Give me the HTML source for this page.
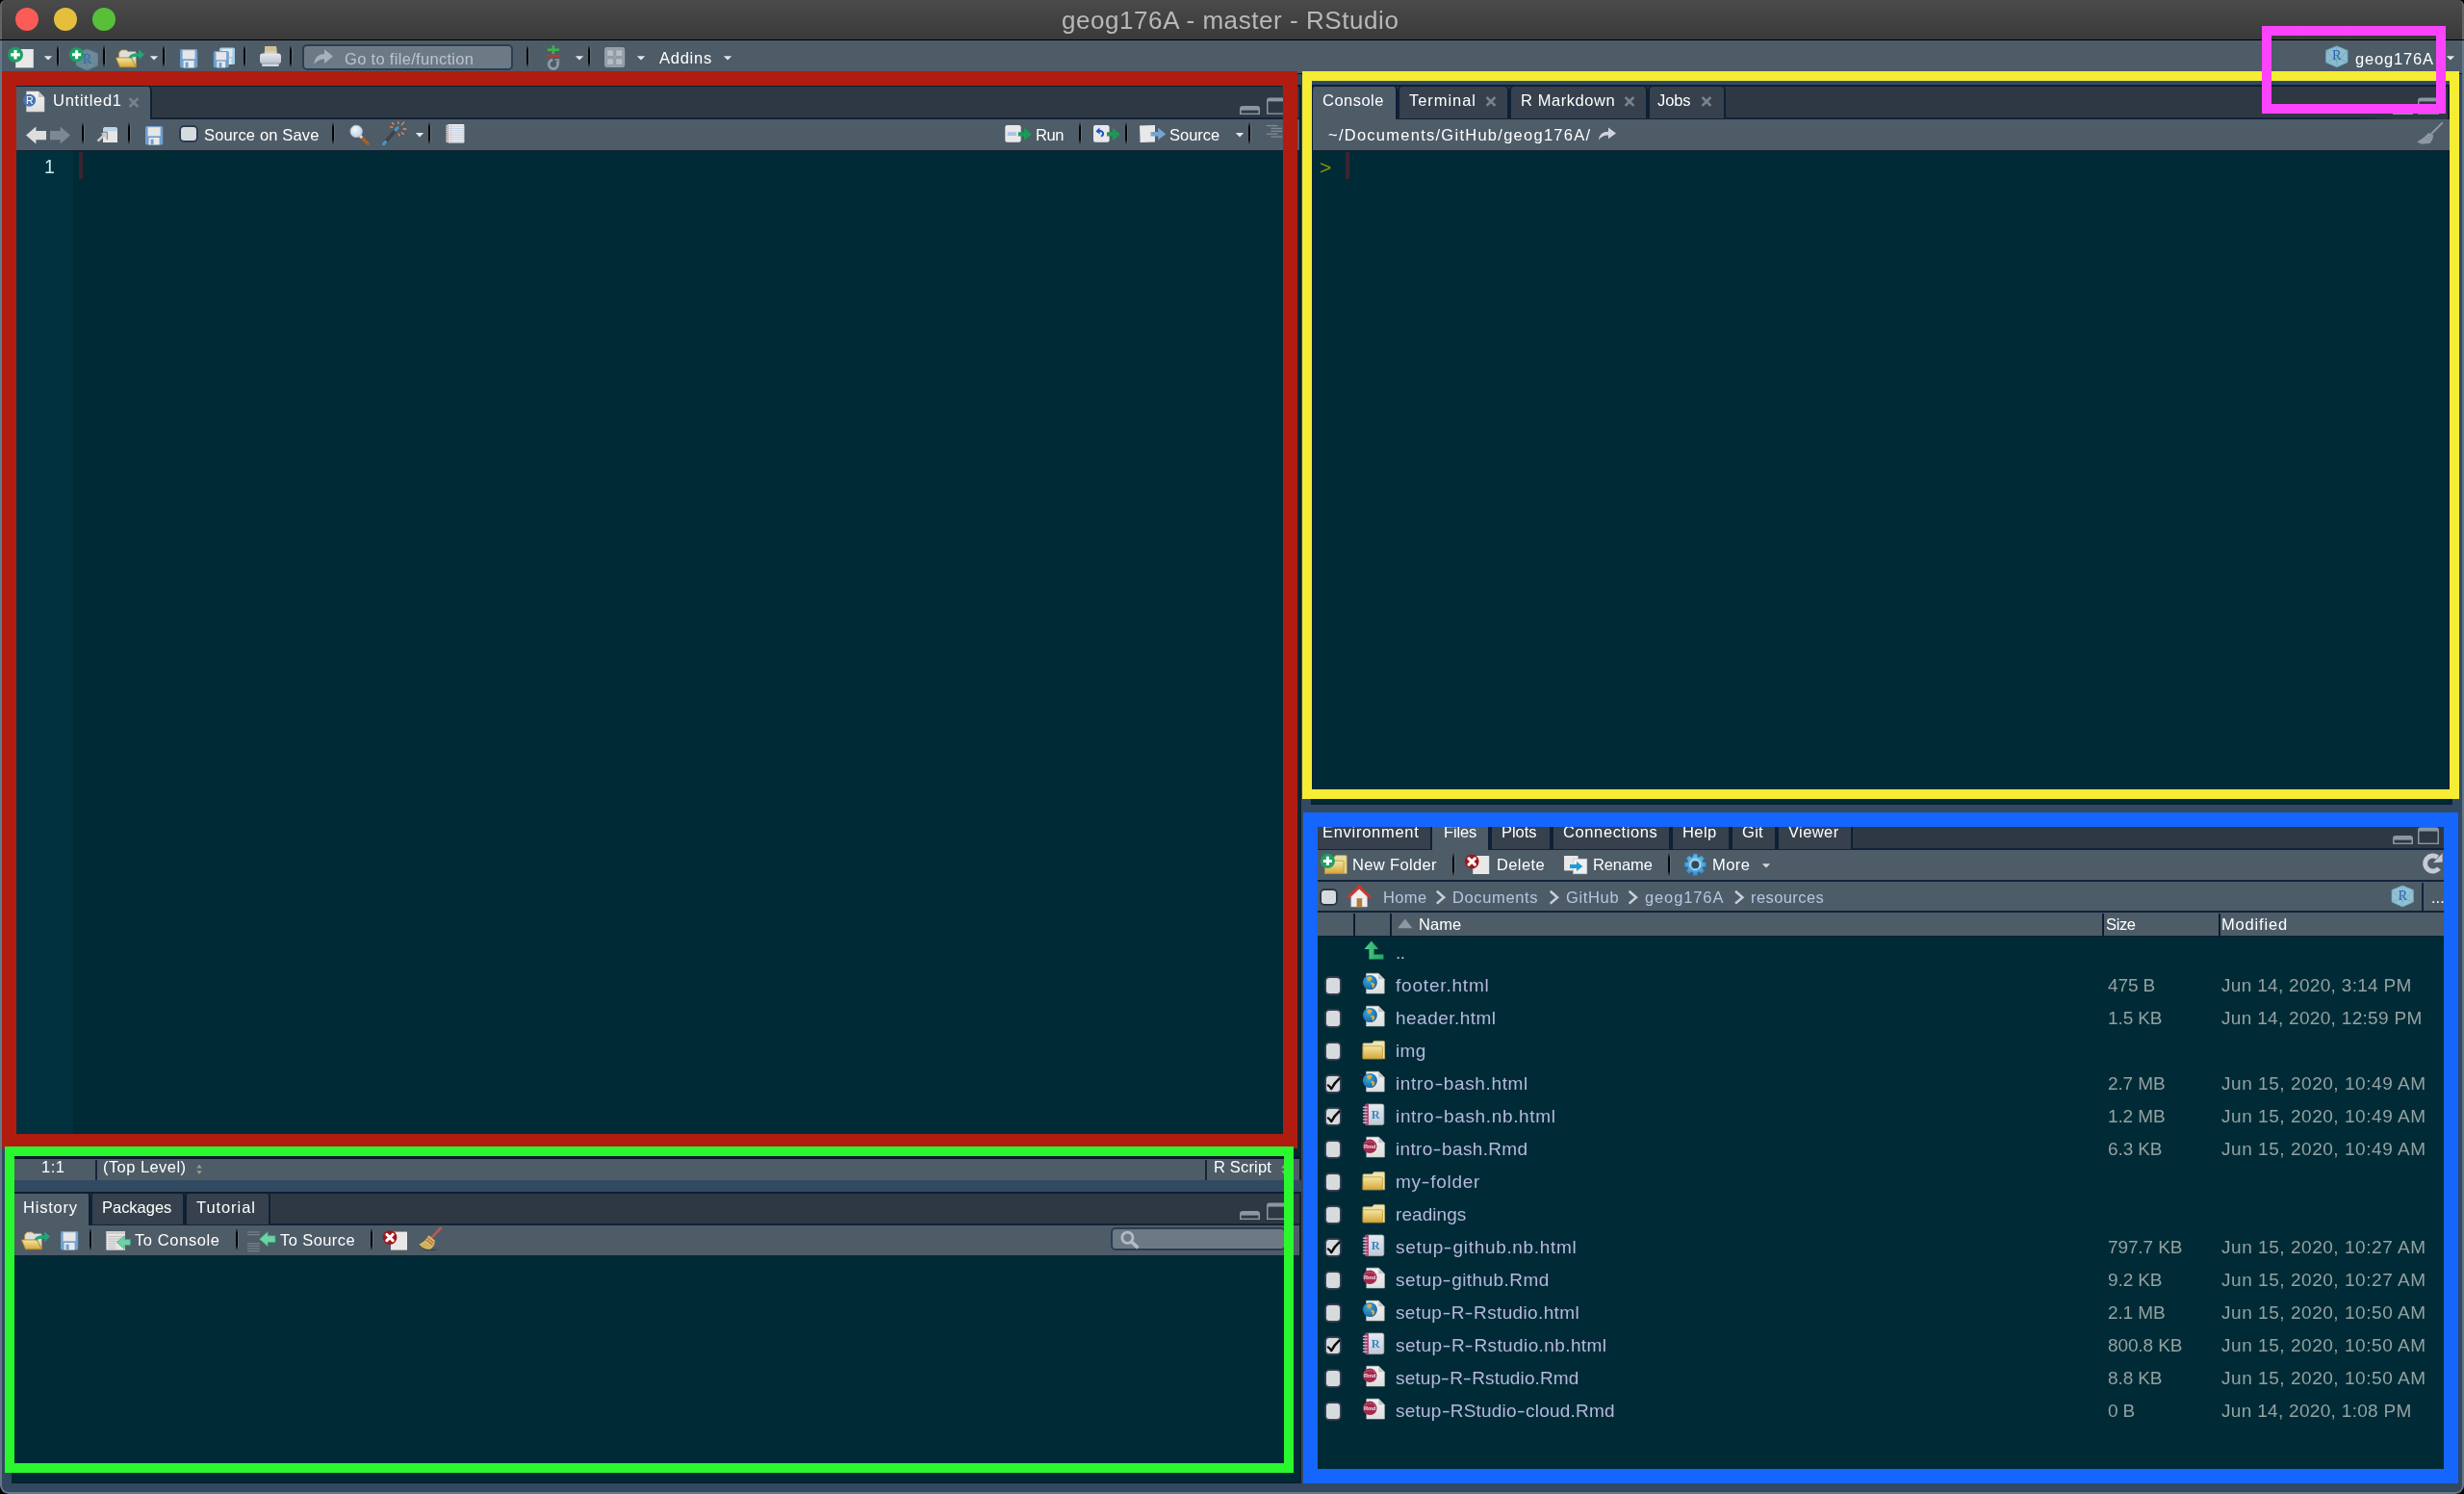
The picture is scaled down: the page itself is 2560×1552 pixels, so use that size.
<!DOCTYPE html><html><head><meta charset="utf-8"><title>RStudio</title><style>
*{box-sizing:border-box;margin:0;padding:0}
html,body{width:2560px;height:1552px;overflow:hidden;background:#000}
body{font-family:"Liberation Sans",sans-serif;color:#fff;position:relative}
#win{position:absolute;left:0;top:0;width:2560px;height:1552px;background:#324a61;border-radius:6px 6px 9px 9px;overflow:hidden}
.a{position:absolute}
.t{position:absolute;white-space:nowrap;line-height:1;will-change:transform}
.sep{position:absolute;width:3px;background:linear-gradient(90deg,rgba(0,0,0,0) 0,#000 18%,#000 70%,rgba(255,255,255,.13) 78%,rgba(255,255,255,.08) 100%);-webkit-mask-image:linear-gradient(rgba(0,0,0,0),#000 22%,#000 78%,rgba(0,0,0,0));mask-image:linear-gradient(rgba(0,0,0,0),#000 22%,#000 78%,rgba(0,0,0,0))}
.tab{position:absolute;height:34px;background:#36414d;border:2px solid #0e2035;border-top-width:1.5px;border-bottom:none;border-radius:5px 5px 0 0}
.tab.on{background:#4e5c68;height:35px;border-top-color:#4e5c68;border-left-color:#4e5c68}
.cb{position:absolute;background:#d6dbde;border-radius:3.2px}
svg{position:absolute;left:0;top:0;overflow:visible}
</style></head><body><div id="win">
<div class="a" style="left:0;top:0;width:2560px;height:42.2px;background:linear-gradient(#4a4a4a,#3a3a3a 40.5px,#000 41px,#000 42.2px)"></div>
<div class="a" style="left:16px;top:8px;width:24px;height:24px;border-radius:50%;background:#fc5b57"></div>
<div class="a" style="left:56px;top:8px;width:24px;height:24px;border-radius:50%;background:#e5bf3c"></div>
<div class="a" style="left:96px;top:8px;width:24px;height:24px;border-radius:50%;background:#57c038"></div>
<div class="a" style="left:0;top:0;width:2560px;height:41px;border-left:2px solid #646464;border-right:2px solid #646464;border-radius:6px 6px 0 0"></div>
<div class="t" style="left:1102.5px;top:7.6px;font-size:26px;letter-spacing:0.56px;color:#b8b8b8;">geog176A - master - RStudio</div>
<div class="a" style="left:0px;top:42px;width:2560px;height:33.6px;background:#4e5c68;"></div>
<div class="a" style="left:0px;top:75.6px;width:2560px;height:1.9px;background:#0a1622;"></div>
<div class="sep" style="left:59px;top:46.5px;height:23px"></div>
<div class="sep" style="left:107px;top:46.5px;height:23px"></div>
<div class="sep" style="left:169px;top:46.5px;height:23px"></div>
<div class="sep" style="left:253px;top:46.5px;height:23px"></div>
<div class="sep" style="left:301px;top:46.5px;height:23px"></div>
<div class="a" style="left:314px;top:46px;width:219px;height:27px;background:#6c7a86;border:2px solid #2a3d52;border-radius:5px"></div>
<div class="t" style="left:357.5px;top:52.7px;font-size:16.5px;letter-spacing:0.31px;color:#bcc4cb;">Go to file/function</div>
<div class="sep" style="left:547px;top:46.5px;height:23px"></div>
<div class="sep" style="left:611px;top:46.5px;height:23px"></div>
<div class="t" style="left:684.5px;top:52.0px;font-size:16.5px;letter-spacing:0.75px;color:#fff;">Addins</div>
<div class="t" style="left:2447.0px;top:52.6px;font-size:16.5px;letter-spacing:0.82px;color:#fff;">geog176A</div>
<div class="a" style="left:12px;top:89px;width:1338px;height:1137px;background:#002b36;"></div>
<div class="a" style="left:12px;top:89px;width:1338px;height:35px;background:#2e3843;border-bottom:2px solid #11233a"></div>
<div class="tab on" style="left:15px;top:89px;width:143px;"></div>
<div class="a" style="left:12px;top:124px;width:1338px;height:33px;background:#4e5c68;border-bottom:1.5px solid #0d2233"></div>
<div class="a" style="left:12px;top:157px;width:64px;height:1047px;background:#01313f;"></div>
<div class="a" style="left:12px;top:1201px;width:1338px;height:3.4px;background:#0a1a2c;"></div>
<div class="a" style="left:12px;top:1204px;width:1338px;height:22px;background:#4e5c68;"></div>
<div class="a" style="left:1350px;top:89px;width:2px;height:1137px;background:#0c1f33;"></div>
<div class="a" style="left:12px;top:88px;width:1340px;height:2px;background:#0c1f33;"></div>
<div class="t" style="left:54.5px;top:96.0px;font-size:16.5px;letter-spacing:0.74px;color:#fff;">Untitled1</div>
<div class="sep" style="left:85px;top:127px;height:23px"></div>
<div class="sep" style="left:133px;top:127px;height:23px"></div>
<div class="cb" style="left:188.3px;top:132.1px;width:15.6px;height:13.6px;box-shadow:0 0 0 1.7px #243449"></div>
<div class="t" style="left:211.5px;top:132.0px;font-size:16.5px;letter-spacing:0.15px;color:#fff;">Source on Save</div>
<div class="sep" style="left:345px;top:127px;height:23px"></div>
<div class="sep" style="left:445px;top:127px;height:23px"></div>
<div class="t" style="left:1075.5px;top:132.0px;font-size:16.5px;letter-spacing:-0.48px;color:#fff;">Run</div>
<div class="sep" style="left:1121px;top:127px;height:23px"></div>
<div class="sep" style="left:1169px;top:127px;height:23px"></div>
<div class="t" style="left:1215.0px;top:132.0px;font-size:16.5px;letter-spacing:-0.02px;color:#fff;">Source</div>
<div class="sep" style="left:1297px;top:127px;height:23px"></div>
<div class="t" style="left:45.9px;top:163.5px;font-size:19.5px;letter-spacing:0.00px;color:#cfecf5;font-family:"Liberation Mono";">1</div>
<div class="a" style="left:82px;top:158px;width:4px;height:28px;background:#3b2530;"></div>
<div class="t" style="left:42.5px;top:1204.0px;font-size:16.5px;letter-spacing:0.53px;color:#fff;">1:1</div>
<div class="a" style="left:99px;top:1205px;width:2px;height:21px;background:#14263a;"></div>
<div class="t" style="left:107.0px;top:1204.0px;font-size:16.5px;letter-spacing:0.44px;color:#fff;">(Top Level)</div>
<div class="a" style="left:1252px;top:1205px;width:2px;height:21px;background:#14263a;"></div>
<div class="t" style="left:1261.0px;top:1204.0px;font-size:16.5px;letter-spacing:0.17px;color:#fff;">R Script</div>
<div class="a" style="left:1362px;top:89px;width:1186px;height:747px;background:#002b36;border-bottom:2px solid #0c1f33"></div>
<div class="a" style="left:1362px;top:89px;width:1186px;height:35px;background:#2e3843;"></div>
<div class="a" style="left:1362px;top:122px;width:1186px;height:2px;background:linear-gradient(90deg,#11233a 0,#11233a 1086px,#2e3843 1124px);"></div>
<div class="tab on" style="left:1364px;top:89px;width:88px;"></div>
<div class="tab" style="left:1452px;top:89px;width:116px;"></div>
<div class="tab" style="left:1568px;top:89px;width:144px;"></div>
<div class="tab" style="left:1712px;top:89px;width:80.59999999999991px;"></div>
<div class="a" style="left:1362px;top:88px;width:1183px;height:2px;background:#0c1f33;"></div>
<div class="a" style="left:2543px;top:88px;width:5px;height:748px;background:#0c1f33;"></div>
<div class="a" style="left:1362px;top:88px;width:2.4px;height:748px;background:#0c1f33;"></div>
<div class="t" style="left:1373.5px;top:95.6px;font-size:16.5px;letter-spacing:0.48px;color:#fff;">Console</div>
<div class="t" style="left:1464.0px;top:95.6px;font-size:16.5px;letter-spacing:0.95px;color:#fff;">Terminal</div>
<div class="t" style="left:1579.5px;top:95.6px;font-size:16.5px;letter-spacing:0.57px;color:#fff;">R Markdown</div>
<div class="t" style="left:1722.0px;top:95.6px;font-size:16.5px;letter-spacing:-0.12px;color:#fff;">Jobs</div>
<div class="a" style="left:1362px;top:124px;width:1186px;height:33px;background:#4e5c68;border-bottom:1.5px solid #0d2233"></div>
<div class="t" style="left:1380.0px;top:132.4px;font-size:16.5px;letter-spacing:1.26px;color:#fff;">~/Documents/GitHub/geog176A/</div>
<div class="a" style="left:1362px;top:88px;width:2.4px;height:748px;background:#0c1f33;"></div>
<div class="t" style="left:1370.5px;top:162.8px;font-size:21px;letter-spacing:0.00px;color:#859900;font-family:"Liberation Mono";">&gt;</div>
<div class="a" style="left:1398px;top:158px;width:4px;height:28px;background:#3b2530;"></div>
<div class="a" style="left:1362px;top:848px;width:1186px;height:693px;background:#002b36;border-bottom:2px solid #0c1f33"></div>
<div class="a" style="left:1362px;top:848px;width:1186px;height:35px;background:#2e3843;border-bottom:2px solid #11233a"></div>
<div class="tab" style="left:1362px;top:848px;width:126.40000000000009px;"></div>
<div class="tab on" style="left:1488.4px;top:848px;width:60.0px;"></div>
<div class="tab" style="left:1548.4px;top:848px;width:63.59999999999991px;"></div>
<div class="tab" style="left:1612px;top:848px;width:124px;"></div>
<div class="tab" style="left:1736px;top:848px;width:61.799999999999955px;"></div>
<div class="tab" style="left:1797.8px;top:848px;width:48.200000000000045px;"></div>
<div class="tab" style="left:1846px;top:848px;width:78.59999999999991px;"></div>
<div class="t" style="left:1373.5px;top:855.6px;font-size:16.5px;letter-spacing:0.72px;color:#fff;">Environment</div>
<div class="t" style="left:1499.5px;top:855.6px;font-size:16.5px;letter-spacing:-0.13px;color:#fff;">Files</div>
<div class="t" style="left:1560.0px;top:855.6px;font-size:16.5px;letter-spacing:-0.04px;color:#fff;">Plots</div>
<div class="t" style="left:1623.5px;top:855.6px;font-size:16.5px;letter-spacing:0.61px;color:#fff;">Connections</div>
<div class="t" style="left:1747.7px;top:855.6px;font-size:16.5px;letter-spacing:0.42px;color:#fff;">Help</div>
<div class="t" style="left:1809.5px;top:855.6px;font-size:16.5px;letter-spacing:0.31px;color:#fff;">Git</div>
<div class="t" style="left:1857.9px;top:855.6px;font-size:16.5px;letter-spacing:0.41px;color:#fff;">Viewer</div>
<div class="a" style="left:1362px;top:883px;width:1186px;height:33px;background:#4e5c68;border-bottom:2px solid #11233a"></div>
<div class="t" style="left:1404.9px;top:890.0px;font-size:16.5px;letter-spacing:0.36px;color:#fff;">New Folder</div>
<div class="sep" style="left:1509px;top:886px;height:24px"></div>
<div class="t" style="left:1554.9px;top:890.0px;font-size:16.5px;letter-spacing:0.38px;color:#fff;">Delete</div>
<div class="t" style="left:1654.7px;top:890.0px;font-size:16.5px;letter-spacing:-0.11px;color:#fff;">Rename</div>
<div class="sep" style="left:1733px;top:886px;height:24px"></div>
<div class="t" style="left:1778.9px;top:890.0px;font-size:16.5px;letter-spacing:0.47px;color:#fff;">More</div>
<div class="a" style="left:1362px;top:916px;width:1186px;height:32px;background:#4e5c68;border-bottom:2px solid #11233a"></div>
<div class="cb" style="left:1372.5px;top:924.5px;width:15.4px;height:14.0px;box-shadow:0 0 0 1.7px #243449"></div>
<div class="t" style="left:1436.7px;top:924.0px;font-size:16.5px;letter-spacing:0.36px;color:#b6c5e3;">Home</div>
<div class="t" style="left:1509.3px;top:924.0px;font-size:16.5px;letter-spacing:0.64px;color:#b6c5e3;">Documents</div>
<div class="t" style="left:1626.9px;top:924.0px;font-size:16.5px;letter-spacing:0.65px;color:#b6c5e3;">GitHub</div>
<div class="t" style="left:1709.3px;top:924.0px;font-size:16.5px;letter-spacing:0.88px;color:#b6c5e3;">geog176A</div>
<div class="t" style="left:1819.1px;top:924.0px;font-size:16.5px;letter-spacing:0.41px;color:#b6c5e3;">resources</div>
<div class="a" style="left:2516px;top:917px;width:2px;height:29px;background:#11233a;"></div>
<div class="t" style="left:2525.5px;top:924.0px;font-size:16.5px;letter-spacing:0.00px;color:#fff;">...</div>
<div class="a" style="left:1362px;top:948px;width:1186px;height:25px;background:#4e5c68;border-bottom:1.5px solid #0d2233"></div>
<div class="a" style="left:1406px;top:949px;width:2px;height:23px;background:#0c1d30;"></div>
<div class="a" style="left:1444px;top:949px;width:2px;height:23px;background:#0c1d30;"></div>
<div class="a" style="left:2184px;top:949px;width:2px;height:23px;background:#0c1d30;"></div>
<div class="a" style="left:2304.6px;top:949px;width:2px;height:23px;background:#0c1d30;"></div>
<div class="t" style="left:1474.1px;top:951.8px;font-size:16.5px;letter-spacing:0.03px;color:#fff;">Name</div>
<div class="t" style="left:2188.1px;top:951.8px;font-size:16.5px;letter-spacing:-0.36px;color:#fff;">Size</div>
<div class="t" style="left:2308.3px;top:951.8px;font-size:16.5px;letter-spacing:0.83px;color:#fff;">Modified</div>
<div class="t" style="left:1449.7px;top:980.2px;font-size:19px;letter-spacing:-0.50px;color:#b6b8de;">..</div>
<div class="cb" style="left:1378.0px;top:1015.6px;width:14.0px;height:16.0px;box-shadow:0 0 0 1.7px #3b4054"></div>
<div class="t" style="left:1449.7px;top:1014.2px;font-size:19px;letter-spacing:0.81px;color:#b6b8de;">footer.html</div>
<div class="t" style="left:2190.1px;top:1014.2px;font-size:19px;letter-spacing:-0.12px;color:#93a1a1;">475 B</div>
<div class="t" style="left:2308.3px;top:1014.2px;font-size:19px;letter-spacing:0.31px;color:#93a1a1;">Jun 14, 2020, 3:14 PM</div>
<div class="cb" style="left:1378.0px;top:1049.6px;width:14.0px;height:16.0px;box-shadow:0 0 0 1.7px #3b4054"></div>
<div class="t" style="left:1449.7px;top:1048.2px;font-size:19px;letter-spacing:0.48px;color:#b6b8de;">header.html</div>
<div class="t" style="left:2190.1px;top:1048.2px;font-size:19px;letter-spacing:-0.11px;color:#93a1a1;">1.5 KB</div>
<div class="t" style="left:2308.3px;top:1048.2px;font-size:19px;letter-spacing:0.31px;color:#93a1a1;">Jun 14, 2020, 12:59 PM</div>
<div class="cb" style="left:1378.0px;top:1083.6px;width:14.0px;height:16.0px;box-shadow:0 0 0 1.7px #3b4054"></div>
<div class="t" style="left:1449.7px;top:1082.2px;font-size:19px;letter-spacing:0.39px;color:#b6b8de;">img</div>
<div class="cb" style="left:1378.0px;top:1117.6px;width:14.0px;height:16.0px;box-shadow:0 0 0 1.7px #3b4054"></div>
<div class="t" style="left:1449.7px;top:1116.2px;font-size:19px;letter-spacing:0.64px;color:#b6b8de;">intro<span style="display:inline-block;transform:scaleX(1.42);margin:0 1.33px">-</span>bash.html</div>
<div class="t" style="left:2190.1px;top:1116.2px;font-size:19px;letter-spacing:-0.12px;color:#93a1a1;">2.7 MB</div>
<div class="t" style="left:2308.3px;top:1116.2px;font-size:19px;letter-spacing:0.54px;color:#93a1a1;">Jun 15, 2020, 10:49 AM</div>
<div class="cb" style="left:1378.0px;top:1151.6px;width:14.0px;height:16.0px;box-shadow:0 0 0 1.7px #3b4054"></div>
<div class="t" style="left:1449.7px;top:1150.2px;font-size:19px;letter-spacing:0.66px;color:#b6b8de;">intro<span style="display:inline-block;transform:scaleX(1.42);margin:0 1.33px">-</span>bash.nb.html</div>
<div class="t" style="left:2190.1px;top:1150.2px;font-size:19px;letter-spacing:-0.12px;color:#93a1a1;">1.2 MB</div>
<div class="t" style="left:2308.3px;top:1150.2px;font-size:19px;letter-spacing:0.54px;color:#93a1a1;">Jun 15, 2020, 10:49 AM</div>
<div class="cb" style="left:1378.0px;top:1185.6px;width:14.0px;height:16.0px;box-shadow:0 0 0 1.7px #3b4054"></div>
<div class="t" style="left:1449.7px;top:1184.2px;font-size:19px;letter-spacing:0.35px;color:#b6b8de;">intro<span style="display:inline-block;transform:scaleX(1.42);margin:0 1.33px">-</span>bash.Rmd</div>
<div class="t" style="left:2190.1px;top:1184.2px;font-size:19px;letter-spacing:-0.11px;color:#93a1a1;">6.3 KB</div>
<div class="t" style="left:2308.3px;top:1184.2px;font-size:19px;letter-spacing:0.54px;color:#93a1a1;">Jun 15, 2020, 10:49 AM</div>
<div class="cb" style="left:1378.0px;top:1219.6px;width:14.0px;height:16.0px;box-shadow:0 0 0 1.7px #3b4054"></div>
<div class="t" style="left:1449.7px;top:1218.2px;font-size:19px;letter-spacing:0.67px;color:#b6b8de;">my<span style="display:inline-block;transform:scaleX(1.42);margin:0 1.33px">-</span>folder</div>
<div class="cb" style="left:1378.0px;top:1253.6px;width:14.0px;height:16.0px;box-shadow:0 0 0 1.7px #3b4054"></div>
<div class="t" style="left:1449.7px;top:1252.2px;font-size:19px;letter-spacing:0.07px;color:#b6b8de;">readings</div>
<div class="cb" style="left:1378.0px;top:1287.6px;width:14.0px;height:16.0px;box-shadow:0 0 0 1.7px #3b4054"></div>
<div class="t" style="left:1449.7px;top:1286.2px;font-size:19px;letter-spacing:0.68px;color:#b6b8de;">setup<span style="display:inline-block;transform:scaleX(1.42);margin:0 1.33px">-</span>github.nb.html</div>
<div class="t" style="left:2190.1px;top:1286.2px;font-size:19px;letter-spacing:-0.11px;color:#93a1a1;">797.7 KB</div>
<div class="t" style="left:2308.3px;top:1286.2px;font-size:19px;letter-spacing:0.54px;color:#93a1a1;">Jun 15, 2020, 10:27 AM</div>
<div class="cb" style="left:1378.0px;top:1321.6px;width:14.0px;height:16.0px;box-shadow:0 0 0 1.7px #3b4054"></div>
<div class="t" style="left:1449.7px;top:1320.2px;font-size:19px;letter-spacing:0.44px;color:#b6b8de;">setup<span style="display:inline-block;transform:scaleX(1.42);margin:0 1.33px">-</span>github.Rmd</div>
<div class="t" style="left:2190.1px;top:1320.2px;font-size:19px;letter-spacing:-0.11px;color:#93a1a1;">9.2 KB</div>
<div class="t" style="left:2308.3px;top:1320.2px;font-size:19px;letter-spacing:0.54px;color:#93a1a1;">Jun 15, 2020, 10:27 AM</div>
<div class="cb" style="left:1378.0px;top:1355.6px;width:14.0px;height:16.0px;box-shadow:0 0 0 1.7px #3b4054"></div>
<div class="t" style="left:1449.7px;top:1354.2px;font-size:19px;letter-spacing:0.36px;color:#b6b8de;">setup<span style="display:inline-block;transform:scaleX(1.42);margin:0 1.33px">-</span>R<span style="display:inline-block;transform:scaleX(1.42);margin:0 1.33px">-</span>Rstudio.html</div>
<div class="t" style="left:2190.1px;top:1354.2px;font-size:19px;letter-spacing:-0.12px;color:#93a1a1;">2.1 MB</div>
<div class="t" style="left:2308.3px;top:1354.2px;font-size:19px;letter-spacing:0.54px;color:#93a1a1;">Jun 15, 2020, 10:50 AM</div>
<div class="cb" style="left:1378.0px;top:1389.6px;width:14.0px;height:16.0px;box-shadow:0 0 0 1.7px #3b4054"></div>
<div class="t" style="left:1449.7px;top:1388.2px;font-size:19px;letter-spacing:0.40px;color:#b6b8de;">setup<span style="display:inline-block;transform:scaleX(1.42);margin:0 1.33px">-</span>R<span style="display:inline-block;transform:scaleX(1.42);margin:0 1.33px">-</span>Rstudio.nb.html</div>
<div class="t" style="left:2190.1px;top:1388.2px;font-size:19px;letter-spacing:-0.11px;color:#93a1a1;">800.8 KB</div>
<div class="t" style="left:2308.3px;top:1388.2px;font-size:19px;letter-spacing:0.54px;color:#93a1a1;">Jun 15, 2020, 10:50 AM</div>
<div class="cb" style="left:1378.0px;top:1423.6px;width:14.0px;height:16.0px;box-shadow:0 0 0 1.7px #3b4054"></div>
<div class="t" style="left:1449.7px;top:1422.2px;font-size:19px;letter-spacing:0.13px;color:#b6b8de;">setup<span style="display:inline-block;transform:scaleX(1.42);margin:0 1.33px">-</span>R<span style="display:inline-block;transform:scaleX(1.42);margin:0 1.33px">-</span>Rstudio.Rmd</div>
<div class="t" style="left:2190.1px;top:1422.2px;font-size:19px;letter-spacing:-0.11px;color:#93a1a1;">8.8 KB</div>
<div class="t" style="left:2308.3px;top:1422.2px;font-size:19px;letter-spacing:0.54px;color:#93a1a1;">Jun 15, 2020, 10:50 AM</div>
<div class="cb" style="left:1378.0px;top:1457.6px;width:14.0px;height:16.0px;box-shadow:0 0 0 1.7px #3b4054"></div>
<div class="t" style="left:1449.7px;top:1456.2px;font-size:19px;letter-spacing:0.21px;color:#b6b8de;">setup<span style="display:inline-block;transform:scaleX(1.42);margin:0 1.33px">-</span>RStudio<span style="display:inline-block;transform:scaleX(1.42);margin:0 1.33px">-</span>cloud.Rmd</div>
<div class="t" style="left:2190.1px;top:1456.2px;font-size:19px;letter-spacing:-0.14px;color:#93a1a1;">0 B</div>
<div class="t" style="left:2308.3px;top:1456.2px;font-size:19px;letter-spacing:0.31px;color:#93a1a1;">Jun 14, 2020, 1:08 PM</div>
<div class="a" style="left:12px;top:1238px;width:1338px;height:303px;background:#002b36;border-bottom:2px solid #0c1f33"></div>
<div class="a" style="left:1350px;top:1238px;width:2px;height:303px;background:#0c1f33;"></div>
<div class="a" style="left:12px;top:1238px;width:1338px;height:35px;background:#2e3843;border-bottom:2px solid #11233a"></div>
<div class="tab on" style="left:12px;top:1238px;width:81.6px;"></div>
<div class="tab" style="left:93.6px;top:1238px;width:98.0px;"></div>
<div class="tab" style="left:191.6px;top:1238px;width:89.4px;"></div>
<div class="t" style="left:23.9px;top:1246.4px;font-size:16.5px;letter-spacing:0.79px;color:#fff;">History</div>
<div class="t" style="left:105.9px;top:1246.4px;font-size:16.5px;letter-spacing:-0.02px;color:#fff;">Packages</div>
<div class="t" style="left:204.3px;top:1246.4px;font-size:16.5px;letter-spacing:0.93px;color:#fff;">Tutorial</div>
<div class="a" style="left:12px;top:1238px;width:1340px;height:2px;background:#0c1f33;"></div>
<div class="a" style="left:12px;top:1273px;width:1338px;height:32px;background:#4e5c68;border-bottom:1.5px solid #0d2233"></div>
<div class="sep" style="left:93px;top:1276px;height:23px"></div>
<div class="t" style="left:140.1px;top:1279.6px;font-size:16.5px;letter-spacing:0.61px;color:#fff;">To Console</div>
<div class="sep" style="left:244.6px;top:1276px;height:23px"></div>
<div class="t" style="left:291.3px;top:1279.6px;font-size:16.5px;letter-spacing:0.41px;color:#fff;">To Source</div>
<div class="sep" style="left:384.8px;top:1276px;height:23px"></div>
<div class="a" style="left:1154px;top:1275.4px;width:182px;height:24px;background:#6c7a86;border:2px solid #2a3d52;border-radius:5px"></div>
<svg width="2560" height="1552" viewBox="0 0 2560 1552"><defs>
<linearGradient id="gFold" x1="0" y1="0" x2="0" y2="1"><stop offset="0" stop-color="#f3e6a6"/><stop offset="1" stop-color="#d6a738"/></linearGradient>
<linearGradient id="gPage" x1="0" y1="0" x2="0" y2="1"><stop offset="0" stop-color="#f2f2f2"/><stop offset="1" stop-color="#dedede"/></linearGradient>
<radialGradient id="gGlobe" cx=".4" cy=".35" r=".75"><stop offset="0" stop-color="#3aa8e0"/><stop offset="1" stop-color="#0e5e9c"/></radialGradient>
<radialGradient id="gLens" cx=".4" cy=".35" r=".7"><stop offset="0" stop-color="#f4f8fc"/><stop offset="1" stop-color="#bdd0e6"/></radialGradient>
<radialGradient id="gGear" cx=".5" cy=".4" r=".6"><stop offset="0" stop-color="#8fd0f2"/><stop offset="1" stop-color="#2f8fd0"/></radialGradient>
<linearGradient id="gPrn" x1="0" y1="0" x2="0" y2="1"><stop offset="0" stop-color="#e4e8ee"/><stop offset="1" stop-color="#b8c0cc"/></linearGradient>
<linearGradient id="gNb" x1="0" y1="0" x2="0" y2="1"><stop offset="0" stop-color="#e6eaf0"/><stop offset="1" stop-color="#c2cad6"/></linearGradient>
<linearGradient id="gUp" x1="0" y1="0" x2="1" y2="0"><stop offset="0" stop-color="#56cf92"/><stop offset=".5" stop-color="#33b56f"/><stop offset="1" stop-color="#27a862"/></linearGradient>
</defs><g transform="translate(8 49)"><rect x="8.2" y="2" width="18.6" height="19.4" fill="#e8e8e8"/><circle cx="8" cy="7.8" r="8" fill="#1c9f63"/><path d="M3.2 7.8h9.6M8 3.0v9.6" stroke="#fff" stroke-width="3.20" fill="none"/></g>
<path d="M45.8 58.300000000000004h8.4l-4.2 4.3z" fill="#e6e6e6"/>
<g transform="translate(79.2 51) scale(1.0)"><g opacity="0.42"><path d="M11.2 0L22.4 4.6V17L11.2 22L0 17V4.6Z" fill="#9ccbe2"/><path d="M11.2 22V0M0 4.6L11.2 16.6L22.4 4.6M0 17L11.2 12.4L22.4 17" stroke="#5ab4c8" stroke-width=".7" fill="none" opacity=".8"/><path d="M11.2 0L22.4 4.6V17L11.2 22L0 17V4.6Z" fill="none" stroke="#62b8cc" stroke-width=".8"/></g><text x="11.3" y="14.6" font-family="Liberation Serif" font-size="14.5" text-anchor="middle" fill="#2a64ad" opacity="0.85">R</text></g>
<g transform="translate(72 49)"><circle cx="7.6" cy="7.8" r="7.6" fill="#1c9f63"/><path d="M3.04 7.8h9.12M7.6 3.24v9.12" stroke="#fff" stroke-width="3.04" fill="none"/></g>
<g transform="translate(120 51.4)"><path d="M3.6 9V3.4L6.2 0.5H11.2L13.2 2.2H20.2Q21.3 2.2 21.3 3.3V17.6L16.6 8.6Z" fill="#dedede" stroke="#b39232" stroke-width=".8" stroke-linejoin="round"/><path d="M0.5 8.6H16.4L21.4 18.3H4.6Z" fill="url(#gFold)" stroke="#b8902c" stroke-width=".9" stroke-linejoin="round"/><path d="M13.6 8.2Q15.6 3.4 24.2 3.8V0L30 5.2L24.2 10.8V7.4Q18.4 6.8 15.6 9.4Z" fill="#1ea77a"/></g>
<path d="M155.8 58.300000000000004h8.4l-4.2 4.3z" fill="#e6e6e6"/>
<g transform="translate(187 51)"><rect x="0" y="0" width="18.2" height="19.4" rx="1.6" fill="#6f9fd0"/><rect x="2.6" y="1.2" width="13.0" height="9.1" fill="#e6e6e6"/><rect x="3.6" y="12.0" width="11.0" height="7.4" fill="#e9e9e9"/><rect x="5.6" y="13.6" width="3" height="5.8" fill="#6f9fd0"/></g>
<g transform="translate(228.0 49.6)"><rect x="0" y="0" width="16" height="17.4" rx="1.6" fill="#9fd0ea"/><rect x="2.6" y="1.2" width="10.8" height="8.2" fill="#e6e6e6"/><rect x="3.6" y="10.8" width="8.8" height="6.6" fill="#e9e9e9"/><rect x="5.6" y="12.2" width="3" height="5.2" fill="#9fd0ea"/></g>
<g transform="translate(221.8 52.9)"><rect x="0" y="0" width="16" height="17.4" rx="1.6" fill="#6f9fd0"/><rect x="2.6" y="1.2" width="10.8" height="8.2" fill="#e6e6e6"/><rect x="3.6" y="10.8" width="8.8" height="6.6" fill="#e9e9e9"/><rect x="5.6" y="12.2" width="3" height="5.2" fill="#6f9fd0"/></g>
<g transform="translate(270 48)"><path d="M5.4 0H17L18 10H4.4Z" fill="#d9ceaa"/><path d="M5.4 0H17L17.4 5H5Z" fill="#cfc29a"/><rect x="0" y="7.6" width="22" height="10.6" rx="3" fill="url(#gPrn)"/><rect x="2.2" y="17.6" width="17.6" height="3.4" rx="1" fill="#d2d6dc"/><rect x="2.2" y="17.4" width="17.6" height="1" fill="#8f98a4"/></g>
<g transform="translate(326 50)"><path d="M0 17Q1 6.4 11 6V1.2L20 8.6L11 16V11.4Q4.4 11 0 17Z" fill="#a7b0bb"/></g>
<g transform="translate(568.6 47.6)"><path d="M0.3 4.2h12.1M6.25 -0.3v8.7" stroke="#3db54a" stroke-width="2.6" fill="none"/><path d="M0.3 10.4h12.1" stroke="#c9322d" stroke-width="2.1"/><path d="M5.64 14.40A4.75 4.75 0 1 0 10.04 16.18" stroke="#8d9aa8" stroke-width="2.8" fill="none"/><path d="M7.9 14.4H11.8V18.4" stroke="#8d9aa8" stroke-width="1.5" fill="none"/></g>
<path d="M597.8 58.300000000000004h8.4l-4.2 4.3z" fill="#e6e6e6"/>
<g transform="translate(628 49.1)"><rect x="0" y="0" width="21.2" height="20.8" rx="2.4" fill="#96a0aa"/><rect x="2.4" y="2.6" width="7.2" height="6.8" rx="1.2" fill="#b5bcc4" stroke="#838e99" stroke-width=".7"/><rect x="2.4" y="11.6" width="7.2" height="6.8" rx="1.2" fill="#b5bcc4" stroke="#838e99" stroke-width=".7"/><rect x="11.700000000000001" y="2.6" width="7.2" height="6.8" rx="1.2" fill="#b5bcc4" stroke="#838e99" stroke-width=".7"/><rect x="11.700000000000001" y="11.6" width="7.2" height="6.8" rx="1.2" fill="#b5bcc4" stroke="#838e99" stroke-width=".7"/></g>
<path d="M661.8 58.300000000000004h8.4l-4.2 4.3z" fill="#e6e6e6"/>
<path d="M751.8 58.300000000000004h8.4l-4.2 4.3z" fill="#e6e6e6"/>
<g transform="translate(2416.6 47.8) scale(1.0)"><g opacity="0.85"><path d="M11.2 0L22.4 4.6V17L11.2 22L0 17V4.6Z" fill="#9ccbe2"/><path d="M11.2 22V0M0 4.6L11.2 16.6L22.4 4.6M0 17L11.2 12.4L22.4 17" stroke="#5ab4c8" stroke-width=".7" fill="none" opacity=".8"/><path d="M11.2 0L22.4 4.6V17L11.2 22L0 17V4.6Z" fill="none" stroke="#62b8cc" stroke-width=".8"/></g><text x="11.3" y="14.6" font-family="Liberation Serif" font-size="14.5" text-anchor="middle" fill="#2a64ad" opacity="1">R</text></g>
<path d="M2541.8 58.300000000000004h8.4l-4.2 4.3z" fill="#e6e6e6"/>
<g transform="translate(24 95)"><path d="M3.6 0h12.399999999999999l6 6v15h-18.4z" fill="url(#gPage)" stroke="#c9c9c9" stroke-width=".6"/><path d="M16.0 0v6h6z" fill="#c4c4c4"/><circle cx="6.6" cy="9.2" r="6.5" fill="#4875b2"/><text x="6.7" y="13" font-family="Liberation Sans" font-size="10.5" text-anchor="middle" fill="#fff">R</text></g>
<path d="M134.6 102.19999999999999l8.8 8.8M143.4 102.19999999999999l-8.8 8.8" stroke="#77838f" stroke-width="2.6" fill="none"/>
<g transform="translate(1288 110)"><path d="M0 9V3Q0 0 3 0H18Q21 0 21 3V9Z" fill="#8a96a1"/><rect x="1.6" y="4.6" width="17.8" height="3" fill="#2e3843"/></g>
<g transform="translate(1316 101.4)"><path d="M0 17.4V3Q0 0 3 0H19Q22 0 22 3V17.4Z" fill="#8a96a1"/><rect x="1.5" y="4" width="19" height="12" fill="#2e3843"/></g>
<g transform="translate(27 131.4)"><path d="M0 9L10.4 0V4.6H21V13.8H10.4V18.2Z" fill="#dedede"/></g>
<g transform="translate(52 131.4)"><path d="M21 9L10.6 0V4.6H0V13.8H10.6V18.2Z" fill="#7d8893"/></g>
<g transform="translate(101 132)"><path d="M6 3Q6 0 9 0H18Q21 0 21 3V16H6Z" fill="#e6e6e6"/><path d="M6 3Q6 0 9 0H18Q21 0 21 3V4.2H6Z" fill="#bdd3e8"/><path d="M0.6 14.6L8 7.4" stroke="#c9c9c9" stroke-width="2.6"/><path d="M3.6 6.2H9.4V12Z" fill="#c9c9c9"/><path d="M2.4 5.2H10.4V13.2" fill="none" stroke="#4e5c68" stroke-width=".8"/></g>
<g transform="translate(151 131)"><rect x="0" y="0" width="18.2" height="19.4" rx="1.6" fill="#6f9fd0"/><rect x="2.6" y="1.2" width="13.0" height="9.1" fill="#e6e6e6"/><rect x="3.6" y="12.0" width="11.0" height="7.4" fill="#e9e9e9"/><rect x="5.6" y="13.6" width="3" height="5.8" fill="#6f9fd0"/></g>
<g transform="translate(363.6 129.6)"><path d="M10.4 11.4L18.6 19.8" stroke="#a86220" stroke-width="3.4" stroke-linecap="round"/><path d="M10 11L12.4 13.4" stroke="#d8dde4" stroke-width="3"/><circle cx="6.6" cy="6.8" r="6.2" fill="url(#gLens)" stroke="#a9bdd2" stroke-width="1"/></g>
<g transform="translate(397 126)"><path d="M1.6 23.6L16 6.8" stroke="#3e4146" stroke-width="3.4" stroke-linecap="round"/><path d="M1.6 23.6L3.4 21.5M14.2 8.9L16 6.8" stroke="#4f93c3" stroke-width="3.4" stroke-linecap="round"/><path d="M12.6 3.6L10 1.2M17 2.8L16.6 0M20 4.2L23 0.6M21.6 8H25.4M20 11.4L22.8 13.8M17.2 12.6L18.2 15.6M11.4 6.4L8 5.6" stroke="#ee8c55" stroke-width="1.3" fill="none"/></g>
<path d="M431.8 138.1h8.4l-4.2 4.3z" fill="#e6e6e6"/>
<g transform="translate(462.4 129)"><rect x="2.6" y="0" width="17.4" height="19.6" rx="1.4" fill="#ececec"/><path d="M4 2.30H19.6" stroke="#bdd0e6" stroke-width=".9"/><path d="M4 4.55H19.6" stroke="#bdd0e6" stroke-width=".9"/><path d="M4 6.80H19.6" stroke="#bdd0e6" stroke-width=".9"/><path d="M4 9.05H19.6" stroke="#bdd0e6" stroke-width=".9"/><path d="M4 11.30H19.6" stroke="#bdd0e6" stroke-width=".9"/><path d="M4 13.55H19.6" stroke="#bdd0e6" stroke-width=".9"/><path d="M4 15.80H19.6" stroke="#bdd0e6" stroke-width=".9"/><path d="M4 18.05H19.6" stroke="#bdd0e6" stroke-width=".9"/><path d="M6.2 0V19.6" stroke="#e7b7b0" stroke-width=".6"/><circle cx="2.2" cy="2.00" r="1.25" fill="#d6d6d6" stroke="#8e8e8e" stroke-width=".6"/><circle cx="2.2" cy="4.24" r="1.25" fill="#d6d6d6" stroke="#8e8e8e" stroke-width=".6"/><circle cx="2.2" cy="6.48" r="1.25" fill="#d6d6d6" stroke="#8e8e8e" stroke-width=".6"/><circle cx="2.2" cy="8.72" r="1.25" fill="#d6d6d6" stroke="#8e8e8e" stroke-width=".6"/><circle cx="2.2" cy="10.96" r="1.25" fill="#d6d6d6" stroke="#8e8e8e" stroke-width=".6"/><circle cx="2.2" cy="13.20" r="1.25" fill="#d6d6d6" stroke="#8e8e8e" stroke-width=".6"/><circle cx="2.2" cy="15.44" r="1.25" fill="#d6d6d6" stroke="#8e8e8e" stroke-width=".6"/><circle cx="2.2" cy="17.68" r="1.25" fill="#d6d6d6" stroke="#8e8e8e" stroke-width=".6"/></g>
<g transform="translate(1044.3 130)"><rect x="0" y="0" width="16.4" height="17.8" rx="2.2" fill="#e8e8e8"/><rect x="2.4" y="7.2" width="9.4" height="3.8" fill="#a9c3ea"/><path d="M13.6 7.2H19.8V2.8000000000000007L27.6 9.4L19.8 16.0V11.600000000000001H13.6Z" fill="#1b9a55"/></g>
<g transform="translate(1136 130)"><rect x="0" y="0" width="16.6" height="17.8" rx="2.2" fill="#e8e8e8"/><path d="M8 11.6Q11.6 9.6 9.2 7Q7.6 5.6 5 6.4" stroke="#1c50cc" stroke-width="2" fill="none"/><path d="M2.4 6.6L6.4 2.6L6.8 9.4Z" fill="#1c50cc"/><path d="M14 7.2H20.0V2.8000000000000007L27.8 9.4L20.0 16.0V11.600000000000001H14Z" fill="#1b9a55"/></g>
<g transform="translate(1184 130)"><path d="M0 0.4L16 0V17.6L0.6 18Z" fill="#e8e8e8"/><path d="M11.6 6.8999999999999995H19.2V2.799999999999999L27.2 9.2L19.2 15.6V11.5H11.6Z" fill="#76a5cf"/></g>
<path d="M1283.8 138.1h8.4l-4.2 4.3z" fill="#e6e6e6"/>
<g transform="translate(1315.8 130.6)"><path d="M0 0.00H11.8" stroke="#7d8993" stroke-width="1.4"/><path d="M4.6 2.86H16.4" stroke="#7d8993" stroke-width="1.4"/><path d="M4.6 5.72H16.4" stroke="#7d8993" stroke-width="1.4"/><path d="M0 8.58H11.8" stroke="#7d8993" stroke-width="1.4"/><path d="M4.6 11.44H16.4" stroke="#7d8993" stroke-width="1.4"/></g>
<path d="M204.2 1213.6l2.8 -3.8l2.8 3.8zM204.2 1216.2l2.8 3.8l2.8 -3.8z" fill="#9c9a8c"/>
<path d="M1331.2 1213.6l2.8 -3.8l2.8 3.8zM1331.2 1216.2l2.8 3.8l2.8 -3.8z" fill="#9c9a8c"/>
<path d="M1544.6 101.0l8.8 8.8M1553.4 101.0l-8.8 8.8" stroke="#77838f" stroke-width="2.6" fill="none"/>
<path d="M1688.6 101.0l8.8 8.8M1697.4 101.0l-8.8 8.8" stroke="#77838f" stroke-width="2.6" fill="none"/>
<path d="M1768.6 101.0l8.8 8.8M1777.4 101.0l-8.8 8.8" stroke="#77838f" stroke-width="2.6" fill="none"/>
<g transform="translate(2486 110)"><path d="M0 9V3Q0 0 3 0H18Q21 0 21 3V9Z" fill="#8a96a1"/><rect x="1.6" y="4.6" width="17.8" height="3" fill="#2e3843"/></g>
<g transform="translate(2512 101.4)"><path d="M0 17.4V3Q0 0 3 0H19Q22 0 22 3V17.4Z" fill="#8a96a1"/><rect x="1.5" y="4" width="19" height="12" fill="#2e3843"/></g>
<g transform="translate(1661 132.4)"><path d="M0 13Q0.6 4.6 10 4.4V0L18 6L10 11.8V8.2Q3.6 8 0 13Z" fill="#cfd4da"/></g>
<g transform="translate(2511 127)"><path d="M26.2 0.9L15.4 11.8" stroke="#8f99a3" stroke-width="2" stroke-linecap="round"/><path d="M12.2 11L17.2 13.6Q17 18.2 13.8 21.8L9.6 22.2L5.6 22.8L0 20.4Q7.2 17 12.2 11Z" fill="#8f99a3"/><path d="M10.4 13.6L15.6 17.2M8.2 15.8L14.4 19.8" stroke="#7c8792" stroke-width=".7"/></g>
<g transform="translate(2486 868)"><path d="M0 9V3Q0 0 3 0H18Q21 0 21 3V9Z" fill="#8a96a1"/><rect x="1.6" y="4.6" width="17.8" height="3" fill="#2e3843"/></g>
<g transform="translate(2512 859.6)"><path d="M0 17.4V3Q0 0 3 0H19Q22 0 22 3V17.4Z" fill="#8a96a1"/><rect x="1.5" y="4" width="19" height="12" fill="#2e3843"/></g>
<g transform="translate(1371.6 887)"><path d="M5 20.4V4.6Q5 3.6 6 3.6H14.4L16.2 1.6H26.4Q27.6 1.6 27.6 2.8V20.4Z" fill="#e9dca0" stroke="#c39a32" stroke-width=".8"/><path d="M5 20.4V7.2H23.4Q24.6 7.2 24.6 8.4V20.4Z" fill="url(#gFold)" stroke="#b8902c" stroke-width=".8"/><circle cx="7.8" cy="7.4" r="7.6" fill="#1c9f63"/><path d="M3.24 7.4h9.12M7.8 2.8400000000000007v9.12" stroke="#fff" stroke-width="3.04" fill="none"/></g>
<g transform="translate(1521.6 887.8)"><rect x="8.6" y="1.2" width="17" height="19" fill="#e8e8e8"/><circle cx="7.6" cy="7.2" r="7.4" fill="#a3161a"/><path d="M4.491999999999999 4.0920000000000005l6.216 6.216M10.708 4.0920000000000005l-6.216 6.216" stroke="#fff" stroke-width="3.11" stroke-linecap="round" fill="none"/></g>
<g transform="translate(1625 889)"><rect x="0" y="0" width="14.6" height="15.4" fill="#e8e8e8"/><rect x="9.6" y="3.2" width="14.2" height="15.6" fill="#f0f0f0" stroke="#c6c6c6" stroke-width=".6"/><path d="M6 9.1H12.999999999999998V6L19.4 11L12.999999999999998 16V12.9H6Z" fill="#1f9bd9"/></g>
<polygon points="1772.49,896.05 1772.49,900.35 1769.35,900.60 1768.69,902.19 1770.74,904.59 1767.69,907.64 1765.29,905.59 1763.71,906.25 1763.45,909.39 1759.15,909.39 1758.90,906.25 1757.31,905.59 1754.91,907.64 1751.86,904.59 1753.91,902.19 1753.25,900.61 1750.11,900.35 1750.11,896.05 1753.25,895.80 1753.91,894.21 1751.86,891.81 1754.91,888.76 1757.31,890.81 1758.89,890.15 1759.15,887.01 1763.45,887.01 1763.70,890.15 1765.29,890.81 1767.69,888.76 1770.74,891.81 1768.69,894.21 1769.35,895.79" fill="url(#gGear)" stroke="#2a7fbe" stroke-width=".6"/><circle cx="1761.3" cy="898.2" r="3.9" fill="#33475a"/><circle cx="1761.3" cy="898.2" r="5.4" fill="none" stroke="#bfe4f7" stroke-width="1"/>
<path d="M1830.8 897.3000000000001h8.4l-4.2 4.3z" fill="#d8d8d8"/>
<path d="M2533.90 901.93A8 8 0 1 1 2532.53 890.70" fill="none" stroke="#c5cad4" stroke-width="5"/><path d="M2528.0 896.2L2537.6 886.4V895.4Z" fill="#c5cad4"/>
<g transform="translate(1399.6 919.6)"><path d="M4.2 11.6V22.4H20.8V11.6L12.5 4Z" fill="#efefef" stroke="#bdbdbd" stroke-width=".6"/><rect x="10" y="13.6" width="5.6" height="8.8" fill="#b5793c"/><path d="M0.8 12.8L12.5 1.4L24.2 12.8" fill="none" stroke="#cf3626" stroke-width="2.8" stroke-linejoin="miter"/></g>
<path d="M1492.8 925.8000000000001l7.4 6.4l-7.4 6.4" fill="none" stroke="#c6cfdd" stroke-width="2.5"/>
<path d="M1610.7 925.8000000000001l7.4 6.4l-7.4 6.4" fill="none" stroke="#c6cfdd" stroke-width="2.5"/>
<path d="M1692.6000000000001 925.8000000000001l7.4 6.4l-7.4 6.4" fill="none" stroke="#c6cfdd" stroke-width="2.5"/>
<path d="M1803.0 925.8000000000001l7.4 6.4l-7.4 6.4" fill="none" stroke="#c6cfdd" stroke-width="2.5"/>
<g transform="translate(2485 920) scale(1.0)"><g opacity="0.9"><path d="M11.2 0L22.4 4.6V17L11.2 22L0 17V4.6Z" fill="#9ccbe2"/><path d="M11.2 22V0M0 4.6L11.2 16.6L22.4 4.6M0 17L11.2 12.4L22.4 17" stroke="#5ab4c8" stroke-width=".7" fill="none" opacity=".8"/><path d="M11.2 0L22.4 4.6V17L11.2 22L0 17V4.6Z" fill="none" stroke="#62b8cc" stroke-width=".8"/></g><text x="11.3" y="14.6" font-family="Liberation Serif" font-size="14.5" text-anchor="middle" fill="#2a64ad" opacity="1">R</text></g>
<path d="M1452 964.2l7.8 -9.6l7.8 9.6z" fill="#8b97a2"/>
<g transform="translate(1417.4 977.6)"><path d="M7.4 0L14.8 8.4H10.2V14H20V19H5V8.4H0Z" fill="url(#gUp)"/></g>
<g transform="translate(1415.6 1011.2)"><path d="M4 0h12.600000000000001l6 6v14.8h-18.6z" fill="url(#gPage)" stroke="#c9c9c9" stroke-width=".6"/><path d="M16.6 0v6h6z" fill="#c4c4c4"/><circle cx="7.8" cy="9.4" r="7.5" fill="url(#gGlobe)"/><path d="M4.6 4.2Q7 2.6 9.6 3.8Q10.6 5.4 8.8 6.6Q8.4 8.4 6.8 8.2Q5.8 6.4 4.6 6.4Z" fill="#e1ab3e"/><path d="M8.6 9.6Q11.4 9.2 12.8 11.2Q12.6 13.8 10.8 15.4Q9.6 13.6 9.8 12Q8.4 11.2 8.6 9.6Z" fill="#e1ab3e"/></g>
<g transform="translate(1415.6 1045.1999999999998)"><path d="M4 0h12.600000000000001l6 6v14.8h-18.6z" fill="url(#gPage)" stroke="#c9c9c9" stroke-width=".6"/><path d="M16.6 0v6h6z" fill="#c4c4c4"/><circle cx="7.8" cy="9.4" r="7.5" fill="url(#gGlobe)"/><path d="M4.6 4.2Q7 2.6 9.6 3.8Q10.6 5.4 8.8 6.6Q8.4 8.4 6.8 8.2Q5.8 6.4 4.6 6.4Z" fill="#e1ab3e"/><path d="M8.6 9.6Q11.4 9.2 12.8 11.2Q12.6 13.8 10.8 15.4Q9.6 13.6 9.8 12Q8.4 11.2 8.6 9.6Z" fill="#e1ab3e"/></g>
<g transform="translate(1415.6 1080.1999999999998)"><path d="M0.4 19.6V4.6Q0.4 3.6 1.4 3.6H10L12 1.2H21.8Q23 1.2 23 2.4V19.6Z" fill="#ece3b4" stroke="#c8b25e" stroke-width=".7"/><path d="M0.4 19.6V6.6H19.6Q20.8 6.6 20.8 7.8V19.6Z" fill="url(#gFold)" stroke="#b8902c" stroke-width=".7"/></g>
<path d="M1379.8999999999999 1127.4999999999998 Q1381.8999999999999 1128.4999999999998 1383.2 1131.3 Q1386.3 1124.8999999999999 1391.5 1120.4999999999998" fill="none" stroke="#0c0c0c" stroke-width="2.3" stroke-linecap="round" stroke-linejoin="round"/>
<g transform="translate(1415.6 1113.1999999999998)"><path d="M4 0h12.600000000000001l6 6v14.8h-18.6z" fill="url(#gPage)" stroke="#c9c9c9" stroke-width=".6"/><path d="M16.6 0v6h6z" fill="#c4c4c4"/><circle cx="7.8" cy="9.4" r="7.5" fill="url(#gGlobe)"/><path d="M4.6 4.2Q7 2.6 9.6 3.8Q10.6 5.4 8.8 6.6Q8.4 8.4 6.8 8.2Q5.8 6.4 4.6 6.4Z" fill="#e1ab3e"/><path d="M8.6 9.6Q11.4 9.2 12.8 11.2Q12.6 13.8 10.8 15.4Q9.6 13.6 9.8 12Q8.4 11.2 8.6 9.6Z" fill="#e1ab3e"/></g>
<path d="M1379.8999999999999 1161.4999999999998 Q1381.8999999999999 1162.4999999999998 1383.2 1165.3 Q1386.3 1158.8999999999999 1391.5 1154.4999999999998" fill="none" stroke="#0c0c0c" stroke-width="2.3" stroke-linecap="round" stroke-linejoin="round"/>
<g transform="translate(1415.8 1147.0)"><rect x="2.4" y="0" width="19.6" height="21.6" rx="2" fill="url(#gNb)" stroke="#aeb7c3" stroke-width=".7"/><rect x="2.4" y="0" width="3.6" height="21.6" fill="#a8326c"/><rect x="0" y="2.4" width="5" height="1.5" rx=".7" fill="#d9a9c0"/><rect x="0" y="5.6" width="5" height="1.5" rx=".7" fill="#d9a9c0"/><rect x="0" y="8.8" width="5" height="1.5" rx=".7" fill="#d9a9c0"/><rect x="0" y="12.0" width="5" height="1.5" rx=".7" fill="#d9a9c0"/><rect x="0" y="15.2" width="5" height="1.5" rx=".7" fill="#d9a9c0"/><rect x="0" y="18.4" width="5" height="1.5" rx=".7" fill="#d9a9c0"/><text x="13.4" y="15.2" font-family="Liberation Serif" font-weight="bold" font-size="12.4" text-anchor="middle" fill="#3a86c4">R</text></g>
<g transform="translate(1415.8 1181.1999999999998)"><path d="M4 0h12.600000000000001l6 6v14.8h-18.6z" fill="url(#gPage)" stroke="#c9c9c9" stroke-width=".6"/><path d="M16.6 0v6h6z" fill="#c4c4c4"/><circle cx="7.4" cy="9.6" r="7.3" fill="#a2284e"/><path d="M1.4 6.4Q7.4 2.6 13.4 6.4" stroke="#c86a88" stroke-width="1" fill="none" opacity=".7"/><text x="7.4" y="11.6" font-family="Liberation Sans" font-weight="bold" font-size="5.6" text-anchor="middle" fill="#f4dfe6">Rmd</text></g>
<g transform="translate(1415.6 1216.1999999999998)"><path d="M0.4 19.6V4.6Q0.4 3.6 1.4 3.6H10L12 1.2H21.8Q23 1.2 23 2.4V19.6Z" fill="#ece3b4" stroke="#c8b25e" stroke-width=".7"/><path d="M0.4 19.6V6.6H19.6Q20.8 6.6 20.8 7.8V19.6Z" fill="url(#gFold)" stroke="#b8902c" stroke-width=".7"/></g>
<g transform="translate(1415.6 1250.1999999999998)"><path d="M0.4 19.6V4.6Q0.4 3.6 1.4 3.6H10L12 1.2H21.8Q23 1.2 23 2.4V19.6Z" fill="#ece3b4" stroke="#c8b25e" stroke-width=".7"/><path d="M0.4 19.6V6.6H19.6Q20.8 6.6 20.8 7.8V19.6Z" fill="url(#gFold)" stroke="#b8902c" stroke-width=".7"/></g>
<path d="M1379.8999999999999 1297.4999999999998 Q1381.8999999999999 1298.4999999999998 1383.2 1301.3 Q1386.3 1294.8999999999999 1391.5 1290.4999999999998" fill="none" stroke="#0c0c0c" stroke-width="2.3" stroke-linecap="round" stroke-linejoin="round"/>
<g transform="translate(1415.8 1283.0)"><rect x="2.4" y="0" width="19.6" height="21.6" rx="2" fill="url(#gNb)" stroke="#aeb7c3" stroke-width=".7"/><rect x="2.4" y="0" width="3.6" height="21.6" fill="#a8326c"/><rect x="0" y="2.4" width="5" height="1.5" rx=".7" fill="#d9a9c0"/><rect x="0" y="5.6" width="5" height="1.5" rx=".7" fill="#d9a9c0"/><rect x="0" y="8.8" width="5" height="1.5" rx=".7" fill="#d9a9c0"/><rect x="0" y="12.0" width="5" height="1.5" rx=".7" fill="#d9a9c0"/><rect x="0" y="15.2" width="5" height="1.5" rx=".7" fill="#d9a9c0"/><rect x="0" y="18.4" width="5" height="1.5" rx=".7" fill="#d9a9c0"/><text x="13.4" y="15.2" font-family="Liberation Serif" font-weight="bold" font-size="12.4" text-anchor="middle" fill="#3a86c4">R</text></g>
<g transform="translate(1415.8 1317.1999999999998)"><path d="M4 0h12.600000000000001l6 6v14.8h-18.6z" fill="url(#gPage)" stroke="#c9c9c9" stroke-width=".6"/><path d="M16.6 0v6h6z" fill="#c4c4c4"/><circle cx="7.4" cy="9.6" r="7.3" fill="#a2284e"/><path d="M1.4 6.4Q7.4 2.6 13.4 6.4" stroke="#c86a88" stroke-width="1" fill="none" opacity=".7"/><text x="7.4" y="11.6" font-family="Liberation Sans" font-weight="bold" font-size="5.6" text-anchor="middle" fill="#f4dfe6">Rmd</text></g>
<g transform="translate(1415.6 1351.1999999999998)"><path d="M4 0h12.600000000000001l6 6v14.8h-18.6z" fill="url(#gPage)" stroke="#c9c9c9" stroke-width=".6"/><path d="M16.6 0v6h6z" fill="#c4c4c4"/><circle cx="7.8" cy="9.4" r="7.5" fill="url(#gGlobe)"/><path d="M4.6 4.2Q7 2.6 9.6 3.8Q10.6 5.4 8.8 6.6Q8.4 8.4 6.8 8.2Q5.8 6.4 4.6 6.4Z" fill="#e1ab3e"/><path d="M8.6 9.6Q11.4 9.2 12.8 11.2Q12.6 13.8 10.8 15.4Q9.6 13.6 9.8 12Q8.4 11.2 8.6 9.6Z" fill="#e1ab3e"/></g>
<path d="M1379.8999999999999 1399.4999999999998 Q1381.8999999999999 1400.4999999999998 1383.2 1403.3 Q1386.3 1396.8999999999999 1391.5 1392.4999999999998" fill="none" stroke="#0c0c0c" stroke-width="2.3" stroke-linecap="round" stroke-linejoin="round"/>
<g transform="translate(1415.8 1385.0)"><rect x="2.4" y="0" width="19.6" height="21.6" rx="2" fill="url(#gNb)" stroke="#aeb7c3" stroke-width=".7"/><rect x="2.4" y="0" width="3.6" height="21.6" fill="#a8326c"/><rect x="0" y="2.4" width="5" height="1.5" rx=".7" fill="#d9a9c0"/><rect x="0" y="5.6" width="5" height="1.5" rx=".7" fill="#d9a9c0"/><rect x="0" y="8.8" width="5" height="1.5" rx=".7" fill="#d9a9c0"/><rect x="0" y="12.0" width="5" height="1.5" rx=".7" fill="#d9a9c0"/><rect x="0" y="15.2" width="5" height="1.5" rx=".7" fill="#d9a9c0"/><rect x="0" y="18.4" width="5" height="1.5" rx=".7" fill="#d9a9c0"/><text x="13.4" y="15.2" font-family="Liberation Serif" font-weight="bold" font-size="12.4" text-anchor="middle" fill="#3a86c4">R</text></g>
<g transform="translate(1415.8 1419.1999999999998)"><path d="M4 0h12.600000000000001l6 6v14.8h-18.6z" fill="url(#gPage)" stroke="#c9c9c9" stroke-width=".6"/><path d="M16.6 0v6h6z" fill="#c4c4c4"/><circle cx="7.4" cy="9.6" r="7.3" fill="#a2284e"/><path d="M1.4 6.4Q7.4 2.6 13.4 6.4" stroke="#c86a88" stroke-width="1" fill="none" opacity=".7"/><text x="7.4" y="11.6" font-family="Liberation Sans" font-weight="bold" font-size="5.6" text-anchor="middle" fill="#f4dfe6">Rmd</text></g>
<g transform="translate(1415.8 1453.1999999999998)"><path d="M4 0h12.600000000000001l6 6v14.8h-18.6z" fill="url(#gPage)" stroke="#c9c9c9" stroke-width=".6"/><path d="M16.6 0v6h6z" fill="#c4c4c4"/><circle cx="7.4" cy="9.6" r="7.3" fill="#a2284e"/><path d="M1.4 6.4Q7.4 2.6 13.4 6.4" stroke="#c86a88" stroke-width="1" fill="none" opacity=".7"/><text x="7.4" y="11.6" font-family="Liberation Sans" font-weight="bold" font-size="5.6" text-anchor="middle" fill="#f4dfe6">Rmd</text></g>
<g transform="translate(1288 1258)"><path d="M0 9V3Q0 0 3 0H18Q21 0 21 3V9Z" fill="#8a96a1"/><rect x="1.6" y="4.6" width="17.8" height="3" fill="#2e3843"/></g>
<g transform="translate(1316 1249.6)"><path d="M0 17.4V3Q0 0 3 0H19Q22 0 22 3V17.4Z" fill="#8a96a1"/><rect x="1.5" y="4" width="19" height="12" fill="#2e3843"/></g>
<g transform="translate(22 1279.4)"><path d="M3.6 9V3.4L6.2 0.5H11.2L13.2 2.2H20.2Q21.3 2.2 21.3 3.3V17.6L16.6 8.6Z" fill="#dedede" stroke="#b39232" stroke-width=".8" stroke-linejoin="round"/><path d="M0.5 8.6H16.4L21.4 18.3H4.6Z" fill="url(#gFold)" stroke="#b8902c" stroke-width=".9" stroke-linejoin="round"/><path d="M13.6 8.2Q15.6 3.4 24.2 3.8V0L30 5.2L24.2 10.8V7.4Q18.4 6.8 15.6 9.4Z" fill="#1ea77a"/></g>
<g transform="translate(63 1279)"><rect x="0" y="0" width="18.2" height="19.4" rx="1.6" fill="#6f9fd0"/><rect x="2.6" y="1.2" width="13.0" height="9.1" fill="#e6e6e6"/><rect x="3.6" y="12.0" width="11.0" height="7.4" fill="#e9e9e9"/><rect x="5.6" y="13.6" width="3" height="5.8" fill="#6f9fd0"/></g>
<g transform="translate(110.4 1279)"><rect x="0" y="0" width="19.6" height="19.6" fill="#e6e6e6"/><rect x="0" y="0" width="19.6" height="3" fill="#cfcfcf"/><path d="M2 5.6H17" stroke="#bdbdbd" stroke-width="1"/><path d="M2 8.0H17" stroke="#bdbdbd" stroke-width="1"/><path d="M2 10.4H17" stroke="#bdbdbd" stroke-width="1"/><path d="M2 12.8H10" stroke="#bdbdbd" stroke-width="1"/><path d="M2 15.2H10" stroke="#bdbdbd" stroke-width="1"/><path d="M2 17.6H10" stroke="#bdbdbd" stroke-width="1"/><path d="M25 8.6H18.799999999999997V4.8L11.2 11.6L18.799999999999997 18.4V14.6H25Z" fill="#6fd2a6" stroke="#35a476" stroke-width=".7"/></g>
<g transform="translate(257 1279.6)"><path d="M0 0.4H12.8" stroke="#74808a" stroke-width="1.3"/><path d="M0 3H12.8" stroke="#74808a" stroke-width="1.3"/><path d="M0 12.2H12.8" stroke="#74808a" stroke-width="1.3"/><path d="M0 14.8H12.8" stroke="#74808a" stroke-width="1.3"/><path d="M0 17.4H12.8" stroke="#74808a" stroke-width="1.3"/><path d="M0 20H12.8" stroke="#74808a" stroke-width="1.3"/><path d="M29 4.199999999999999H21.2V0.0L12.6 7.6L21.2 15.2V11.0H29Z" fill="#6fd2a6" stroke="#35a476" stroke-width=".7"/></g>
<g transform="translate(397.4 1278.4)"><rect x="8.6" y="1.2" width="17" height="19" fill="#e8e8e8"/><circle cx="7.6" cy="7.2" r="7.4" fill="#a3161a"/><path d="M4.491999999999999 4.0920000000000005l6.216 6.216M10.708 4.0920000000000005l-6.216 6.216" stroke="#fff" stroke-width="3.11" stroke-linecap="round" fill="none"/></g>
<g transform="translate(435 1275)"><path d="M22.8 0.8L13.4 10.6" stroke="#c4574a" stroke-width="2.6" stroke-linecap="round"/><path d="M10.2 8.2L16.8 13.6Q17.4 19.4 11.6 23.2Q4.6 22.4 0.4 17.4Q7 14.8 10.2 8.2Z" fill="#d8b865"/><path d="M9 10.6L15.6 16M7.6 12.8L14.4 18.2" stroke="#b0683a" stroke-width="1.1"/><path d="M4 18.6L9 20.8M6 16.6L12 20" stroke="#c19c48" stroke-width=".8"/><ellipse cx="12" cy="23.4" rx="8" ry="1" fill="#2a3540" opacity=".5"/></g>
<g transform="translate(1164 1278.4)"><circle cx="7.4" cy="7.4" r="5.6" fill="none" stroke="#b4bbc2" stroke-width="2.8"/><path d="M11.6 11.6L18.4 18" stroke="#b4bbc2" stroke-width="3.6"/></g></svg>
<div class="a" style="left:2px;top:74px;width:1346px;height:1119px;border:15px solid #b11c11"></div>
<div class="a" style="left:5px;top:1191px;width:1339px;height:339px;border:10px solid #2af72e"></div>
<div class="a" style="left:1353px;top:74px;width:1202px;height:756px;border:10px solid #f5ec33"></div>
<div class="a" style="left:1354px;top:844px;width:1200px;height:697px;border:15px solid #1565ff"></div>
<div class="a" style="left:2350px;top:27px;width:191px;height:91px;border:10px solid #fd44fd"></div>
<div class="a" style="left:0;top:42px;width:2560px;height:1510px;border:2px solid #66788a;border-top:none;border-radius:0 0 9px 9px"></div>
</div></body></html>
